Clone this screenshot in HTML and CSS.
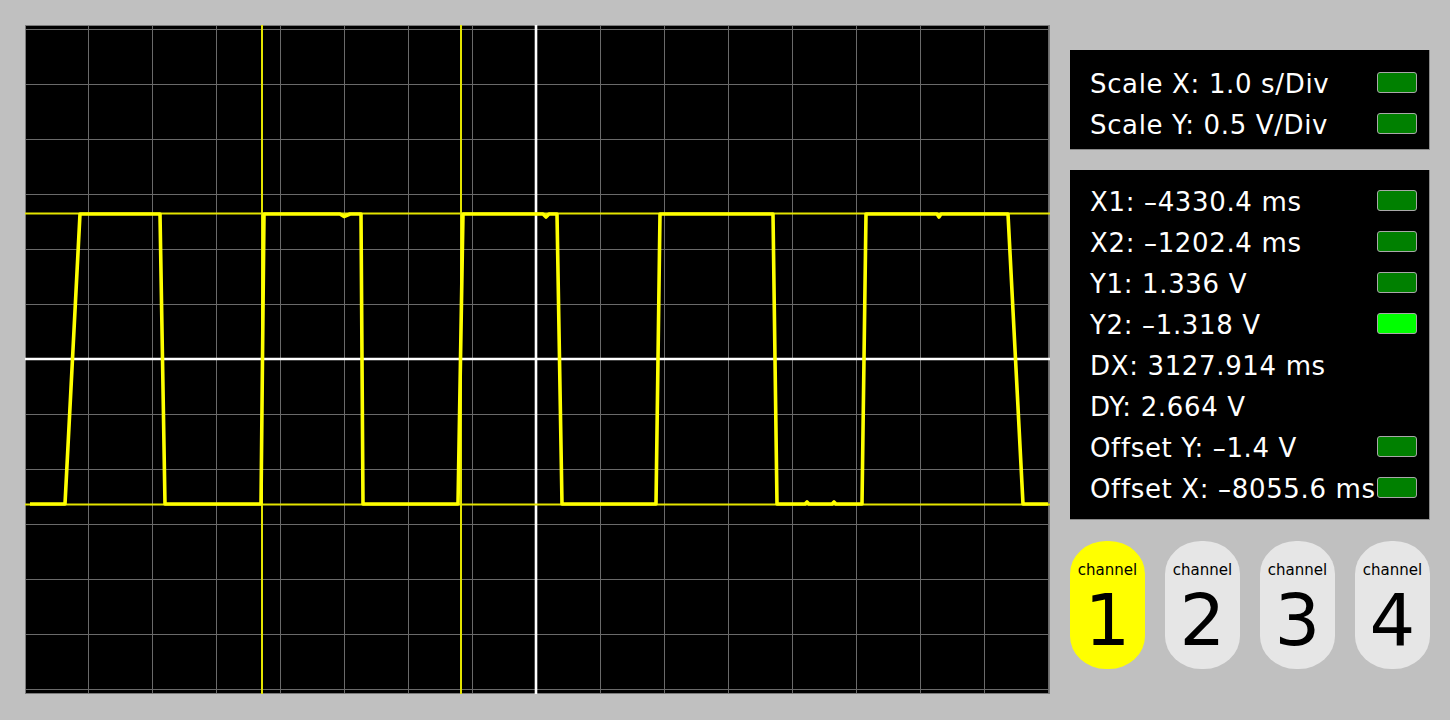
FILE: index.html
```html
<!DOCTYPE html>
<html>
<head>
<meta charset="utf-8">
<link rel="stylesheet" href="styles.css">
</head>
<body>
<div class="app">
  <svg class="scope" width="1025" height="669" viewBox="25 25 1025 669" xmlns="http://www.w3.org/2000/svg">
    <rect x="25" y="25" width="1025" height="669" fill="#000"/>
    <g stroke="#6a6a6a" stroke-width="1">
      <path d="M25 29.5H1050M25 84.5H1050M25 139.5H1050M25 194.5H1050M25 249.5H1050M25 304.5H1050M25 414.5H1050M25 469.5H1050M25 524.5H1050M25 579.5H1050M25 634.5H1050M25 689.5H1050"/>
      <path d="M88.5 25V694M152.5 25V694M216.5 25V694M280.5 25V694M344.5 25V694M408.5 25V694M472.5 25V694M600.5 25V694M664.5 25V694M728.5 25V694M792.5 25V694M856.5 25V694M920.5 25V694M984.5 25V694M1048.5 25V694"/>
    </g>
    <rect x="25.5" y="25.5" width="1024" height="668" fill="none" stroke="#7a7a7a" stroke-width="1"/>
    <g stroke="#fff" stroke-width="2.6">
      <path d="M25 359H1050"/>
      <path d="M536 25V694"/>
    </g>
    <g stroke="#e4e400" stroke-width="2">
      <path d="M262 25V695"/>
      <path d="M461 25V695"/>
      <path d="M25 213.5H1050"/>
      <path d="M25 504.5H1050"/>
    </g>
    <polyline fill="none" stroke="#ffff00" stroke-width="3.6" stroke-linejoin="round"
      points="30,504 65,504 80,214 160,214 165,504 261,504 264,214 340,214 344,216.5 350,214 361,214 363,504 458,504 463,214 543,214 546,217 549,214 557,214 562,504 656,504 660,214 773,214 777,504 805,504 807,502 809,504 832,504 834,502 836,504 862,504 866,214 937,214 939,217 941,214 1008,214 1023,504 1048,504"/>
  </svg>

  <div class="side">
    <div class="panel panel-scale">
      <div class="row"><span class="label">Scale X: 1.0 s/Div</span><span class="led"></span></div>
      <div class="row"><span class="label">Scale Y: 0.5 V/Div</span><span class="led"></span></div>
    </div>
    <div class="panel panel-cursors">
      <div class="row"><span class="label">X1: –4330.4 ms</span><span class="led"></span></div>
      <div class="row"><span class="label">X2: –1202.4 ms</span><span class="led"></span></div>
      <div class="row"><span class="label">Y1: 1.336 V</span><span class="led"></span></div>
      <div class="row"><span class="label">Y2: –1.318 V</span><span class="led led-on"></span></div>
      <div class="row"><span class="label">DX: 3127.914 ms</span></div>
      <div class="row"><span class="label">DY: 2.664 V</span></div>
      <div class="row"><span class="label">Offset Y: –1.4 V</span><span class="led"></span></div>
      <div class="row"><span class="label">Offset X: –8055.6 ms</span><span class="led"></span></div>
    </div>
    <div class="channels">
      <div class="chan chan-active"><span class="chan-name">channel</span><span class="chan-num">1</span></div>
      <div class="chan"><span class="chan-name">channel</span><span class="chan-num">2</span></div>
      <div class="chan"><span class="chan-name">channel</span><span class="chan-num">3</span></div>
      <div class="chan"><span class="chan-name">channel</span><span class="chan-num">4</span></div>
    </div>
  </div>
</div>
</body>
</html>
```

FILE: styles.css
```css
html, body {
  margin: 0;
  padding: 0;
  background: #c0c0c0;
  font-family: "DejaVu Sans", "Liberation Sans", sans-serif;
}

.app {
  display: flex;
  align-items: flex-start;
  gap: 20px;
  padding: 25px 0 0 25px;
  width: 1450px;
  height: 720px;
  box-sizing: border-box;
}

.scope {
  display: block;
  flex: none;
}

.side {
  width: 360px;
  margin-top: 25px;
  display: flex;
  flex-direction: column;
}

.panel {
  background: #000;
  color: #fff;
  box-sizing: border-box;
  border-right: 1px solid #8a8a8a;
  border-bottom: 1px solid #8a8a8a;
  padding: 0 12px 0 20px;
}

.panel-scale {
  height: 100px;
  padding-top: 12px;
}

.panel-cursors {
  margin-top: 20px;
  height: 350px;
  padding-top: 10px;
}

.row {
  display: flex;
  align-items: center;
  height: 41px;
}

.label {
  flex: 1;
  min-width: 0;
  white-space: nowrap;
  font-size: 26px;
  letter-spacing: 0.65px;
  line-height: 38px;
  padding-top: 3px;
}

.led {
  flex: none;
  position: relative;
  width: 40px;
  height: 21px;
  box-sizing: border-box;
  background: #008000;
  border: 1px solid #a8a8a8;
  border-radius: 3px;
}

.led-on {
  background: #00ff00;
}

.channels {
  margin-top: 21px;
  display: flex;
  gap: 20px;
}

.chan {
  width: 75px;
  height: 128px;
  border-radius: 36px / 33px;
  background: #e6e6e6;
  color: #000;
  display: flex;
  flex-direction: column;
  align-items: center;
  padding-top: 21px;
  box-sizing: border-box;
}

.chan-active {
  background: #ffff00;
}

.chan-name {
  font-size: 15px;
  line-height: 16px;
}

.chan-num {
  margin-top: 6px;
  font-size: 72px;
  line-height: 72px;
}
```
